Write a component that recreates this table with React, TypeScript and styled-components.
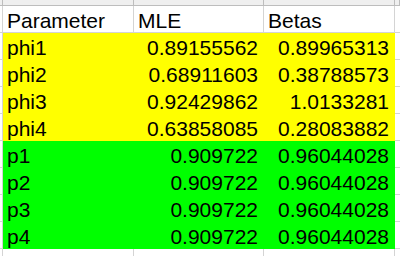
import React from "react";
import styled, { createGlobalStyle } from "styled-components";

const GlobalStyle = createGlobalStyle`
  html, body {
    margin: 0;
    padding: 0;
    background: #ffffff;
    overflow: hidden;
  }
  body {
    font-family: "Liberation Sans", Arial, sans-serif;
  }
`;

const GRID = "#d4d4d4";
const HEAD_LINE = "#bdbdbd";
const WIDTHS = [3, 131, 130, 131];

const Sheet = styled.div`
  display: flex;
  flex-direction: column;
  width: 400px;
  height: 256px;
  overflow: hidden;
`;

const Row = styled.div`
  display: flex;
`;

const HeadCell = styled.div<{ $w?: number }>`
  box-sizing: border-box;
  height: 6px;
  background: #efefef;
  border-bottom: 1px solid ${HEAD_LINE};
  border-right: 1px solid ${HEAD_LINE};
  ${({ $w }) => ($w ? `width: ${$w}px; flex: none;` : "flex: 1;")}
`;

const Cell = styled.div<{ $w?: number; $fill?: string; $right?: boolean }>`
  box-sizing: border-box;
  height: 27px;
  padding: 3px 5px 0 4px;
  line-height: 23px;
  font-size: 21px;
  color: #000;
  white-space: nowrap;
  overflow: hidden;
  text-align: ${({ $right }) => ($right ? "right" : "left")};
  background: ${({ $fill }) => $fill ?? "#ffffff"};
  border-bottom: 1px solid ${({ $fill }) => $fill ?? GRID};
  border-right: 1px solid ${({ $fill }) => $fill ?? GRID};
  ${({ $w }) => ($w ? `width: ${$w}px; flex: none;` : "flex: 1;")}
`;

const Edge = styled.div`
  box-sizing: border-box;
  width: ${WIDTHS[0]}px;
  flex: none;
  height: 27px;
  border-bottom: 1px solid ${GRID};
  border-right: 1px solid ${GRID};
`;

const YELLOW = "#ffff00";
const GREEN = "#00ff00";

const rows: [string, string, string, string][] = [
  ["phi1", "0.89155562", "0.89965313", YELLOW],
  ["phi2", "0.68911603", "0.38788573", YELLOW],
  ["phi3", "0.92429862", "1.0133281", YELLOW],
  ["phi4", "0.63858085", "0.28083882", YELLOW],
  ["p1", "0.909722", "0.96044028", GREEN],
  ["p2", "0.909722", "0.96044028", GREEN],
  ["p3", "0.909722", "0.96044028", GREEN],
  ["p4", "0.909722", "0.96044028", GREEN],
];

export default function App() {
  return (
    <>
      <GlobalStyle />
      <Sheet>
        <Row>
          {WIDTHS.map((w, i) => (
            <HeadCell key={i} $w={w} />
          ))}
          <HeadCell />
        </Row>
        <Row>
          <Edge />
          <Cell $w={WIDTHS[1]}>Parameter</Cell>
          <Cell $w={WIDTHS[2]}>MLE</Cell>
          <Cell $w={WIDTHS[3]}>Betas</Cell>
          <Cell />
        </Row>
        {rows.map(([name, mle, beta, fill]) => (
          <Row key={name}>
            <Edge />
            <Cell $w={WIDTHS[1]} $fill={fill}>
              {name}
            </Cell>
            <Cell $w={WIDTHS[2]} $fill={fill} $right>
              {mle}
            </Cell>
            <Cell $w={WIDTHS[3]} $fill={fill} $right>
              {beta}
            </Cell>
            <Cell />
          </Row>
        ))}
        <Row>
          <Edge />
          <Cell $w={WIDTHS[1]} />
          <Cell $w={WIDTHS[2]} />
          <Cell $w={WIDTHS[3]} />
          <Cell />
        </Row>
      </Sheet>
    </>
  );
}
